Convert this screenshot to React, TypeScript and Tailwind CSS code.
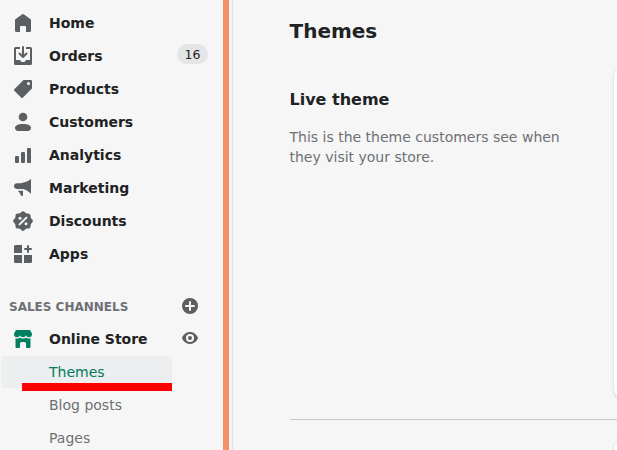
import React from "react";

function Icon({ children, className = "fill-[#5c5f62]" }: { children: React.ReactNode; className?: string }) {
  return (
    <svg viewBox="0 0 20 20" className={`h-5 w-5 shrink-0 ${className}`}>
      {children}
    </svg>
  );
}

const icons = {
  home: (
    <path d="M18 7.26V17.5a1.5 1.5 0 0 1-1.5 1.5h-3a.5.5 0 0 1-.5-.5V14a1 1 0 0 0-1-1H8a1 1 0 0 0-1 1v4.500a.5.5 0 0 1-.5.5h-3A1.500 1.500 0 0 1 2 17.500V7.260c0-.5.25-.97.66-1.250L9.380 1.210a1.090 1.090 0 0 1 1.240 0l6.720 4.800c.41.28.66.75.66 1.250Z" />
  ),
  orders: (
    <path
      fillRule="evenodd"
      d="M11 1a1 1 0 1 0-2 0v7.590L7.210 6.790a1 1 0 0 0-1.420 1.420l3.500 3.500a1 1 0 0 0 1.420 0l3.500-3.500a1 1 0 0 0-1.420-1.420L11 8.590V1ZM3 14V3h4V1H2.500A1.500 1.500 0 0 0 1 2.500v15A1.500 1.500 0 0 0 2.500 19h15a1.500 1.500 0 0 0 1.500-1.500v-15A1.500 1.500 0 0 0 17.500 1H13v2h4v11h-3.500c-.77 0-.93.34-1.300 1.150C12 15.600 11.700 16 11 16H9c-.7 0-1-.4-1.200-.85C7.430 14.340 7.270 14 6.500 14H3Z"
    />
  ),
  products: (
    <path
      fillRule="evenodd"
      d="M10.290 1.290A1 1 0 0 1 11 1h7a1 1 0 0 1 1 1v7a1 1 0 0 1-.29.710l-9 9a1 1 0 0 1-1.420 0l-7-7a1 1 0 0 1 0-1.420l9-9ZM15.500 6a1.500 1.500 0 1 0 0-3 1.500 1.500 0 0 0 0 3Z"
    />
  ),
  customers: (
    <>
      <circle cx="10" cy="5" r="4.300" />
      <path d="M10 12c-4.800 0-8 1.600-8 3.800C2 17.800 3.200 19 5 19h10c1.800 0 3-1.200 3-3.200 0-2.200-3.200-3.800-8-3.800Z" />
    </>
  ),
  analytics: (
    <>
      <rect x="2" y="11" width="4" height="7" rx="1" />
      <rect x="8" y="7" width="4" height="11" rx="1" />
      <rect x="14" y="3" width="4" height="15" rx="1" />
    </>
  ),
  marketing: (
    <path d="M18 1v14.800c-2.300-2.400-4.700-4.100-8-4.800H4C2.200 11 1 9.800 1 8.100S2.200 5.200 4 5.200h3.500C12 4.500 15.200 3.200 18 1ZM4.800 12.800H10V17c0 .6-.4 1-1 1-.4 0-.8-.2-1-.6l-1.200-2.300-2-2.300Z" />
  ),
  discounts: (
    <>
      <path
        d="M11.570.650a2.220 2.220 0 0 0-3.140 0l-.69.690c-.42.410-.99.650-1.570.650h-.97A2.220 2.220 0 0 0 2.990 4.210v.96c0 .59-.24 1.150-.65 1.570l-.69.690a2.220 2.220 0 0 0 0 3.140l.69.690c.41.420.65.980.65 1.570v.97c0 1.220 1 2.220 2.220 2.220h.96c.59 0 1.150.24 1.570.65l.69.690a2.220 2.220 0 0 0 3.140 0l.69-.69c.42-.41.980-.65 1.570-.65h.97c1.220 0 2.220-1 2.220-2.220v-.97c0-.59.24-1.150.65-1.570l.69-.69a2.220 2.220 0 0 0 0-3.140l-.69-.69a2.220 2.220 0 0 1-.65-1.570v-.96c0-1.220-1-2.220-2.220-2.220h-.97a2.220 2.220 0 0 1-1.570-.65l-.69-.69Z"
        transform="translate(10 10) scale(1.08) translate(-10 -9)"
      />
      <path d="m6.600 13.400 6.800-6.800" className="stroke-[#f6f6f6] stroke-2" strokeLinecap="round" />
      <circle cx="7" cy="7.300" r="1.500" className="fill-[#f6f6f6]" />
      <circle cx="13" cy="12.700" r="1.500" className="fill-[#f6f6f6]" />
    </>
  ),
  apps: (
    <>
      <path d="M2.500 1H9v8H1V2.500A1.500 1.500 0 0 1 2.500 1ZM1 11h8v8H2.500A1.500 1.500 0 0 1 1 17.500V11ZM11 11h8v6.500a1.500 1.500 0 0 1-1.500 1.500H11v-8Z" />
      <path d="M14 2a1 1 0 1 1 2 0v2h2a1 1 0 1 1 0 2h-2v2a1 1 0 1 1-2 0V6h-2a1 1 0 1 1 0-2h2V2Z" />
    </>
  ),
  store: (
    <>
      <path d="M3.600 1h12.800c.5 0 .9.300 1.100.7L19 4.800v.7C19 7 17.700 8.200 16 8.200S13 7.200 13 6c0 1.200-1.300 2.200-3 2.200S7 7.200 7 6c0 1.200-1.300 2.200-3 2.200S1 7 1 5.500v-.7l1.500-3.100c.2-.4.6-.7 1.100-.7Z" />
      <path d="M2.500 9.300c.5.150 1 .2 1.500.2 1.200 0 2.300-.4 3-1.100.7.700 1.800 1.100 3 1.100s2.300-.4 3-1.100c.7.700 1.800 1.100 3 1.100.5 0 1-.05 1.500-.2V18a1 1 0 0 1-1 1H14a1 1 0 0 1-1-1v-3.500a1.500 1.500 0 0 0-1.500-1.500h-3A1.500 1.500 0 0 0 7 14.500V18a1 1 0 0 1-1 1H3.500a1 1 0 0 1-1-1V9.300Z" />
    </>
  ),
  plus: (
    <path
      fillRule="evenodd"
      d="M10 18a8 8 0 1 0 0-16 8 8 0 0 0 0 16ZM9 6a1 1 0 0 1 2 0v3h3a1 1 0 1 1 0 2h-3v3a1 1 0 1 1-2 0v-3H6a1 1 0 1 1 0-2h3V6Z"
    />
  ),
  eye: (
    <path
      fillRule="evenodd"
      d="M17.930 9.630C17.850 9.400 15.720 4 10 4S2.150 9.400 2.070 9.630a1 1 0 0 0 0 .74C2.150 10.600 4.280 16 10 16s7.850-5.400 7.930-5.630a1 1 0 0 0 0-.74ZM10 14a4 4 0 1 1 0-8 4 4 0 0 1 0 8Zm0-6a2 2 0 1 0 0 4 2 2 0 0 0 0-4Z"
    />
  ),
};

const items: { label: string; icon: React.ReactNode; badge?: string }[] = [
  { label: "Home", icon: icons.home },
  { label: "Orders", icon: icons.orders, badge: "16" },
  { label: "Products", icon: icons.products },
  { label: "Customers", icon: icons.customers },
  { label: "Analytics", icon: icons.analytics },
  { label: "Marketing", icon: icons.marketing },
  { label: "Discounts", icon: icons.discounts },
  { label: "Apps", icon: icons.apps },
];

export default function App() {
  return (
    <div className="flex h-[450px] w-[617px] overflow-hidden bg-[#f6f6f6] font-['DejaVu_Sans',sans-serif] text-sm leading-5 text-[#202223]">
      <nav className="flex w-[223px] shrink-0 flex-col pt-[7px]">
        <ul className="flex flex-col gap-px font-bold">
          {items.map((item) => (
            <li key={item.label} className="flex h-8 items-center pr-[15px] pl-[13px]">
              <Icon>{item.icon}</Icon>
              <span className="ml-4">{item.label}</span>
              {item.badge && (
                <span className="mb-1 ml-auto flex h-5 w-[31px] items-center justify-center rounded-full bg-[#e4e5e7] pt-0.5 text-[12.5px] font-normal">
                  {item.badge}
                </span>
              )}
            </li>
          ))}
        </ul>
        <div className="flex h-[53px] shrink-0 items-end justify-between pr-[23px] pb-[7px] pl-[9px]">
          <h2 className="-mb-px text-xs leading-5 font-bold text-[#6d7175]">SALES CHANNELS</h2>
          <Icon>{icons.plus}</Icon>
        </div>
        <div className="flex h-8 shrink-0 items-center justify-between pr-[23px] pl-[13px] font-bold">
          <Icon className="fill-[#008060]">{icons.store}</Icon>
          <span className="mr-auto ml-4">Online Store</span>
          <Icon className="mb-0.5 fill-[#5c5f62]">{icons.eye}</Icon>
        </div>
        <ul className="mt-px flex flex-col gap-px text-[#6d7175]">
          <li className="relative ml-px flex h-8 w-[171px] items-center rounded bg-[#edeeef] pl-12 text-[#007b5c]">
            Themes
            <span className="absolute top-[27px] right-0 h-2 w-[150px] bg-[#ff0000]" />
          </li>
          <li className="flex h-8 items-center pl-[49px]">Blog posts</li>
          <li className="flex h-8 items-center pl-[49px]">Pages</li>
        </ul>
      </nav>
      <div className="w-[6px] shrink-0 bg-[#f4916a]" />
      <div className="ml-[3px] w-px shrink-0 bg-[#e1e3e5]" />
      <main className="flex w-[384px] shrink-0 flex-col pl-[56.5px]">
        <h1 className="mt-[17px] text-xl leading-7 font-bold">Themes</h1>
        <section className="mt-[23px] flex h-[330px] shrink-0">
          <div className="w-[324.5px] shrink-0 pt-5">
            <h2 className="text-base leading-6 font-bold">Live theme</h2>
            <p className="mt-[15px] w-[290px] text-[#6d7175]">This is the theme customers see when they visit your store.</p>
          </div>
          <div className="w-10 shrink-0 rounded-lg bg-white shadow-[0_0_5px_rgba(23,24,24,0.05),0_1px_2px_rgba(0,0,0,0.15)]" />
        </section>
        <hr className="mt-[21px] shrink-0 border-[#c9cccf]" />
        <section className="flex h-10 shrink-0 pt-[21px] pl-[324.5px]">
          <div className="h-10 w-10 shrink-0 rounded-lg bg-white shadow-[0_0_5px_rgba(23,24,24,0.05),0_1px_2px_rgba(0,0,0,0.15)]" />
        </section>
      </main>
    </div>
  );
}
